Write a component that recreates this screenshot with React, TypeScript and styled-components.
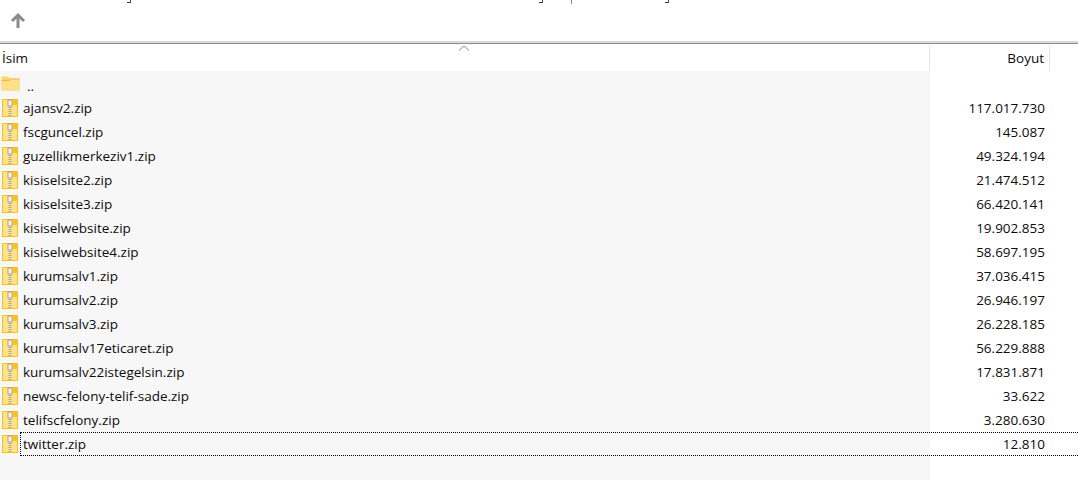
import { createGlobalStyle, styled } from "styled-components";

const GlobalStyle = createGlobalStyle`
  html, body { margin: 0; padding: 0; background: #fff; overflow: hidden; }
  body { font-family: "Open Sans", "Noto Sans", sans-serif; font-size: 13.5px; color: #0c0c0c; }
`;

const Window = styled.div`
  width: 1078px;
  height: 480px;
  display: flex;
  flex-direction: column;
  overflow: hidden;
`;

const Toolbar = styled.div`
  height: 41px;
  position: relative;
  display: flex;
  align-items: center;
  padding-left: 9px;
  box-sizing: border-box;
  border-bottom: 0;
`;

const Tail = styled.span<{ $left: number; $h?: number }>`
  position: absolute;
  top: 0;
  left: ${p => p.$left}px;
  width: 5px;
  height: ${p => p.$h ?? 3}px;
  border-bottom: 1px solid #333;
  border-right: 1px solid #555;
  box-sizing: border-box;
  width: 4px;
`;

const Bar = styled.span`
  position: absolute;
  top: 0;
  left: 571px;
  width: 1px;
  height: 4px;
  background: #888;
`;

const Rule = styled.div`
  height: 3px;
  background: #d9d9d9;
  border-bottom: 1px solid #8c8c8c;
  box-sizing: border-box;
`;

const Header = styled.div`
  height: 27px;
  display: grid;
  grid-template-columns: 930px 120px 1fr;
  position: relative;
`;

const HeaderCell = styled.div<{ $right?: boolean }>`
  display: flex;
  align-items: center;
  justify-content: ${p => (p.$right ? "flex-end" : "flex-start")};
  padding: ${p => (p.$right ? "0 5px 0 0" : "0 0 0 2px")};
  box-sizing: border-box;
  border-right: 1px solid #e5e5e5;
  margin-top: 1px;
  line-height: 26px;
`;

const SortArrow = styled.svg`
  position: absolute;
  left: 458px;
  top: 1px;
`;

const Rows = styled.div`
  flex: 1;
  display: flex;
  flex-direction: column;
`;

const ParentRow = styled.div`
  height: 25px;
  display: grid;
  grid-template-columns: 930px 1fr;
`;

const Row = styled.div<{ $focused?: boolean }>`
  height: 24px;
  display: grid;
  grid-template-columns: 930px 1fr;
  position: relative;
  ${p =>
    p.$focused &&
    `&::after {
      content: "";
      position: absolute;
      left: 20px;
      right: 0;
      top: 0;
      bottom: 0;
      border: 1px dotted #000;
      border-right: 0;
    }`}
`;

const NameCell = styled.div`
  background: #f7f7f7;
  display: flex;
  align-items: center;
  padding-left: 2px;
  gap: 5px;
  line-height: 24px;
  white-space: nowrap;
`;

const SizeCell = styled.div`
  display: flex;
  align-items: center;
  justify-content: flex-end;
  padding-right: 33px;
  line-height: 24px;
`;

const Filler = styled.div`
  flex: 1;
  width: 930px;
  background: #f7f7f7;
`;

const FolderName = styled.span`
  margin-left: 2px;
  position: relative;
  top: 2px;
`;

const files: [string, string][] = [
  ["ajansv2.zip", "117.017.730"],
  ["fscguncel.zip", "145.087"],
  ["guzellikmerkeziv1.zip", "49.324.194"],
  ["kisiselsite2.zip", "21.474.512"],
  ["kisiselsite3.zip", "66.420.141"],
  ["kisiselwebsite.zip", "19.902.853"],
  ["kisiselwebsite4.zip", "58.697.195"],
  ["kurumsalv1.zip", "37.036.415"],
  ["kurumsalv2.zip", "26.946.197"],
  ["kurumsalv3.zip", "26.228.185"],
  ["kurumsalv17eticaret.zip", "56.229.888"],
  ["kurumsalv22istegelsin.zip", "17.831.871"],
  ["newsc-felony-telif-sade.zip", "33.622"],
  ["telifscfelony.zip", "3.280.630"],
  ["twitter.zip", "12.810"],
];

function UpIcon() {
  return (
    <svg width="18" height="18" viewBox="0 0 18 18">
      <path d="M9 16V3.5M3 9l6-6 6 6" fill="none" stroke="#8a8a8a" strokeWidth="3" />
    </svg>
  );
}

function FolderIcon() {
  return (
    <svg width="19" height="15" viewBox="0 0 19 15">
      <path d="M0.5 1.5C0.5 1 1 .5 1.5 .5H7l2 2h8.5c.6 0 1 .4 1 1V14c0 .3-.3.5-.5.5H1c-.3 0-.5-.2-.5-.5z" fill="#ffd469" />
      <path d="M.5 4.5H8L10 3h8.5v11c0 .3-.3.5-.5.5H1c-.3 0-.5-.2-.5-.5z" fill="#ffe08a" />
      <path d="M.5 4.5H8L10 3h8.5" fill="none" stroke="#f5b93a" />
    </svg>
  );
}

function ZipIcon() {
  return (
    <svg width="16" height="18" viewBox="0 0 16 18" style={{ flexShrink: 0 }}>
      <rect x="0.5" y="0.5" width="15" height="17" fill="#ffe38a" stroke="#fbbf1e" />
      <rect x="11" y="1" width="4" height="5" fill="#fbbf1e" />
      <rect x="6" y="1" width="4" height="6" fill="#fff6d6" stroke="#8f8f8f" strokeWidth="0.8" />
      <path d="M8 8v9" stroke="#a8a8a8" strokeWidth="3" strokeDasharray="1 1" />
    </svg>
  );
}

export default function App() {
  return (
    <Window>
      <GlobalStyle />
      <Toolbar>
        <Tail $left={127} />
        <Tail $left={539} />
        <Bar />
        <Tail $left={665} />
        <UpIcon />
      </Toolbar>
      <Rule />
      <Header>
        <HeaderCell>İsim</HeaderCell>
        <HeaderCell $right>Boyut</HeaderCell>
        <SortArrow width="12" height="6" viewBox="0 0 12 6">
          <path d="M1 5.5l5-4.5 5 4.5" fill="none" stroke="#8a8a8a" />
        </SortArrow>
      </Header>
      <Rows>
        <ParentRow>
          <NameCell style={{ paddingLeft: 1 }}>
            <FolderIcon />
            <FolderName>..</FolderName>
          </NameCell>
          <SizeCell />
        </ParentRow>
        {files.map(([name, size], i) => (
          <Row key={name} $focused={i === files.length - 1}>
            <NameCell>
              <ZipIcon />
              {name}
            </NameCell>
            <SizeCell>{size}</SizeCell>
          </Row>
        ))}
        <Filler />
      </Rows>
    </Window>
  );
}
